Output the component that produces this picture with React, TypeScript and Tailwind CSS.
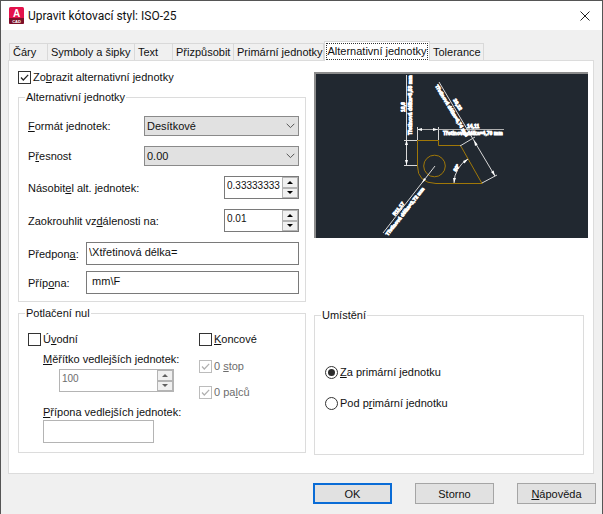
import { useState } from 'react';
import type { ReactNode } from 'react';

const tabs = [
  { name: 'Čáry', width: 'w-[39px]' },
  { name: 'Symboly a šipky', width: 'w-[87px]' },
  { name: 'Text', width: 'w-[38px]' },
  { name: 'Přizpůsobit', width: 'w-[61px]' },
  { name: 'Primární jednotky', width: 'w-[90px]' },
  { name: 'Alternativní jednotky', width: 'w-[106px]' },
  { name: 'Tolerance', width: 'w-[54px]' },
];

function Check({ id, children, defaultChecked, disabled }: { id: string; children: ReactNode; defaultChecked?: boolean; disabled?: boolean }) {
  return (
    <div className="flex h-4 items-center gap-0.5">
      <span className="grid">
        <input
          id={id}
          type="checkbox"
          defaultChecked={defaultChecked}
          disabled={disabled}
          className="peer col-start-1 row-start-1 size-[13px] appearance-none border border-[#333] bg-white disabled:border-[#bcbcbc]"
        />
        <svg viewBox="0 0 13 13" className="pointer-events-none invisible col-start-1 row-start-1 size-[13px] text-[#222] peer-checked:visible peer-disabled:text-[#b0b0b0]">
          <path d="M3 6.5 L5.3 9 L10.2 3.8" fill="none" stroke="currentColor" strokeWidth="1.2" />
        </svg>
      </span>
      <label htmlFor={id} className={disabled ? 'text-[#6d6d6d]' : ''}>{children}</label>
    </div>
  );
}

function Radio({ id, children, defaultChecked }: { id: string; children: ReactNode; defaultChecked?: boolean }) {
  return (
    <div className="flex h-4 items-center gap-0.5">
      <span className="grid">
        <input
          id={id}
          type="radio"
          name="placement"
          defaultChecked={defaultChecked}
          className="peer col-start-1 row-start-1 size-[13px] appearance-none rounded-full border border-[#333] bg-white"
        />
        <span className="pointer-events-none invisible col-start-1 row-start-1 size-[7px] place-self-center rounded-full bg-[#2b2b2b] peer-checked:visible" />
      </span>
      <label htmlFor={id}>{children}</label>
    </div>
  );
}

function Select({ id, options }: { id: string; options: string[] }) {
  return (
    <span className="grid w-[155px]">
      <select id={id} className="col-start-1 row-start-1 h-5 appearance-none border border-[#8a8a8a] bg-[#e1e1e1] pl-0.5">
        {options.map((o) => (
          <option key={o}>{o}</option>
        ))}
      </select>
      <svg viewBox="0 0 9 6" className="pointer-events-none col-start-1 row-start-1 mr-1 h-1.5 w-[9px] self-center justify-self-end">
        <path d="M0.7 0.8 L4.5 4.6 L8.3 0.8" fill="none" stroke="#555" strokeWidth="1" />
      </svg>
    </span>
  );
}

function Spinner({ id, value, width, disabled }: { id: string; value: string; width: string; disabled?: boolean }) {
  const arrow = disabled ? '#606060' : '#000';
  const button = 'flex flex-1 items-center justify-center border border-[#b4b4b4] bg-[#f0f0f0]';
  return (
    <div className={`flex h-[23px] border bg-white ${width} ${disabled ? 'border-[#b4b4b4] text-[#6d6d6d]' : 'border-[#7a7a7a]'}`}>
      <input id={id} defaultValue={value} disabled={disabled} className="min-w-0 flex-1 pb-1 pl-0.5 text-[10px]" />
      <div className="flex w-4 flex-col">
        <button aria-label="Zvýšit" disabled={disabled} className={button}>
          <svg viewBox="0 0 6 3" className="h-[3px] w-1.5"><path d="M0 3 L3 0 L6 3 Z" fill={arrow} /></svg>
        </button>
        <button aria-label="Snížit" disabled={disabled} className={button}>
          <svg viewBox="0 0 6 3" className="h-[3px] w-1.5"><path d="M0 0 L3 3 L6 0 Z" fill={arrow} /></svg>
        </button>
      </div>
    </div>
  );
}

function Group({ title, className, children }: { title: string; className?: string; children: ReactNode }) {
  return (
    <fieldset className={`min-w-0 border border-[#dcdcdc] ${className ?? ''}`}>
      <legend className="ml-1.5 px-px leading-4">{title}</legend>
      {children}
    </fieldset>
  );
}

// Sample part with primary and alternate dimensions
function Preview() {
  return (
    <div className="border-t-2 border-l-2 border-[#8c8c8c] bg-[#212830]">
      <svg viewBox="0 0 272 164" className="h-[164px] w-full" fontFamily="Liberation Sans, sans-serif" fontSize="5" fontWeight="bold">
        <g fill="none" stroke="#a07808" strokeWidth="1">
          <path d="M101.5 66.5 H122.5 V71.5 H144.5 L166 109.5 H120 Q101.5 109 101.5 92 Z" />
          <circle cx="118.5" cy="92" r="10.8" />
        </g>
        <g fill="none" stroke="#d8d8d8" strokeWidth="1">
          <path d="M90.5 1 V92 M88 66.5 H101 M88 91.5 H101" />
          <path d="M101.5 53 V66 M122.5 53 V66" />
          <path d="M101 55.5 H188" stroke="#b0b0b0" />
          <path d="M123 8 L179 102 M144 72 L159 63 M166 109 L181 101" />
          <path d="M152 85 A28 28 0 0 0 138 109" />
          <path d="M119 92 L67 159" />
        </g>
        <g fill="#fff">
          <path d="M90.5 66 l-1.5 5 h3 Z M90.5 91 l-1.5 -5 h3 Z M101 55.5 l5 -1.5 v3 Z M122 55.5 l-5 -1.5 v3 Z" />
          <path d="M158 66 l1 6 2.6 -1.6 Z M179 102 l-4 -4 2.6 -1.6 Z M106 109 l2 -5 2 1.5 Z" />
          <path d="M138 109 l-1 -5 h3 Z M152 85 l-5 2 1.5 2.4 Z" />
        </g>
        <g fill="#fff" stroke="#fff" strokeWidth="0.8">
          <text x="151" y="54">14,11</text>
          <text x="127" y="61">Třetinová délka=4,70 mm</text>
          <text transform="translate(89 38) rotate(-90)">16,6</text>
          <text transform="translate(96 61) rotate(-90)">Třetinová délka=5,53 mm</text>
          <text transform="translate(137 26) rotate(59)">20,22</text>
          <text transform="translate(119 12) rotate(59)">Třetinová délka=6,74 mm</text>
          <text transform="translate(79 142) rotate(-52)">R11,17</text>
          <text transform="translate(72 162) rotate(-52)">Třetinová délka=3,72 mm</text>
          <text transform="translate(140 98) rotate(-60)">60°</text>
        </g>
      </svg>
    </div>
  );
}

export default function App() {
  const [active, setActive] = useState('Alternativní jednotky');
  const button = 'h-[21px] w-[79px] bg-[#e1e1e1] text-center';

  return (
    <div className="flex min-h-screen flex-col border border-[#555] bg-[#f0f0f0] font-['Liberation_Sans',sans-serif] text-[11px] leading-4 text-[#111]">
      <header className="flex h-[29px] items-center bg-white pr-3 pl-2">
        <svg viewBox="0 0 15 17" className="h-[17px] w-[15px]">
          <rect width="15" height="17" rx="1.5" fill="#e3124b" />
          <path d="M0 11 H15 V15.5 Q15 17 13.5 17 H1.5 Q0 17 0 15.5 Z" fill="#7b1029" />
          <text x="7.5" y="10" textAnchor="middle" fontSize="10" fontWeight="bold" fill="#fff">A</text>
          <text x="7.5" y="15.5" textAnchor="middle" fontSize="4" fontWeight="bold" fill="#fff">CAD</text>
        </svg>
        <h1 className="ml-1 flex-1 font-[Roboto,sans-serif] text-[12px]">Upravit kótovací styl: ISO-25</h1>
        <button aria-label="Zavřít">
          <svg viewBox="0 0 10 10" className="size-2.5"><path d="M0.5 0.5 L9.5 9.5 M9.5 0.5 L0.5 9.5" stroke="#222" fill="none" /></svg>
        </button>
      </header>

      <div role="tablist" className="mt-[11px] ml-2 flex h-[19px] items-end whitespace-nowrap">
        {tabs.map((tab) => (
          <button
            key={tab.name}
            role="tab"
            aria-selected={tab.name === active}
            onClick={() => setActive(tab.name)}
            className={
              tab.name === active
                ? `z-10 -mb-px h-5 border border-b-0 border-[#d9d9d9] bg-white p-px ${tab.width}`
                : `h-[17px] border border-b-0 border-l-0 border-[#d9d9d9] pl-[3px] text-left first:border-l ${tab.width}`
            }
          >
            {tab.name === active ? <span className="block h-[17px] border border-dotted border-[#333] leading-[14px]">{tab.name}</span> : tab.name}
          </button>
        ))}
      </div>

      <main className="mr-2 ml-[7px] flex flex-1 gap-2 border border-[#dcdcdc] bg-white pt-2 pr-[5px] pb-[18px] pl-[9px]">
        <div className="w-72">
          <Check id="show" defaultChecked>Zo<u>b</u>razit alternativní jednotky</Check>

          <Group title="Alternativní jednotky" className="mt-1">
            <div className="mt-[11px] flex flex-col gap-2.5 pr-1.5 pb-[7px] pl-[9px]">
              <div className="flex items-center justify-between">
                <label htmlFor="format"><u>F</u>ormát jednotek:</label>
                <Select id="format" options={['Desítkové', 'Vědecké', 'Technické']} />
              </div>
              <div className="flex items-center justify-between">
                <label htmlFor="precision">P<u>ř</u>esnost</label>
                <Select id="precision" options={['0.00', '0.0', '0']} />
              </div>
              <div className="flex items-center justify-between">
                <label htmlFor="multiplier">Násobit<u>e</u>l alt. jednotek:</label>
                <Spinner id="multiplier" value="0.33333333" width="w-[75px]" />
              </div>
              <div className="flex items-center justify-between">
                <label htmlFor="round">Zaokrouhlit vz<u>d</u>álenosti na:</label>
                <Spinner id="round" value="0.01" width="w-[75px]" />
              </div>
              <div className="flex flex-col gap-1.5">
                <div className="flex items-center justify-between">
                  <label htmlFor="prefix">Předpon<u>a</u>:</label>
                  <input id="prefix" defaultValue="\Xtřetinová délka=" className="h-[23px] w-[213px] border border-[#7a7a7a] pb-1 pl-0.5" />
                </div>
                <div className="flex items-center justify-between">
                  <label htmlFor="suffix">Příp<u>o</u>na:</label>
                  <input id="suffix" defaultValue=" mm\F" className="h-[23px] w-[213px] border border-[#7a7a7a] pb-1 pl-0.5" />
                </div>
              </div>
            </div>
          </Group>

          <Group title="Potlačení nul" className="mt-[3px]">
            <div className="mt-2.5 flex pb-[9px] pl-[9px]">
              <div className="w-[171px]">
                <Check id="leading">Ú<u>v</u>odní</Check>
                <div className="mt-1 ml-[15px]">
                  <label htmlFor="scale" className="block"><u>M</u>ěřítko vedlejších jednotek:</label>
                  <div className="mt-0.5 ml-4">
                    <Spinner id="scale" value="100" width="w-[115px]" disabled />
                  </div>
                  <label htmlFor="subsuffix" className="mt-3 block"><u>P</u>řípona vedlejších jednotek:</label>
                  <input id="subsuffix" disabled className="block h-[23px] w-[111px] border border-[#b4b4b4] bg-white pl-0.5" />
                </div>
              </div>
              <div>
                <Check id="trailing"><u>K</u>oncové</Check>
                <div className="mt-[11px] flex flex-col gap-2.5">
                  <Check id="feet" defaultChecked disabled>0 <u>s</u>top</Check>
                  <Check id="inches" defaultChecked disabled>0 pa<u>l</u>ců</Check>
                </div>
              </div>
            </div>
          </Group>
        </div>

        <div className="flex-1 pt-[3px]">
          <Preview />
          <Group title="Umístění" className="mt-[69px] mr-1 h-[148px]">
            <div className="mt-[41px] flex flex-col gap-[15px] pl-2.5">
              <Radio id="after" defaultChecked><u>Z</u>a primární jednotku</Radio>
              <Radio id="below">Pod p<u>r</u>imární jednotku</Radio>
            </div>
          </Group>
        </div>
      </main>

      <footer className="mt-[9px] mr-1.5 mb-2.5 flex justify-end gap-[23px]">
        <button className={`${button} border-2 border-[#0a6cd6]`}>OK</button>
        <button className={`${button} border border-[#a5a5a5]`}>Storno</button>
        <button className={`${button} border border-[#a5a5a5]`}><u>N</u>ápověda</button>
      </footer>
    </div>
  );
}
